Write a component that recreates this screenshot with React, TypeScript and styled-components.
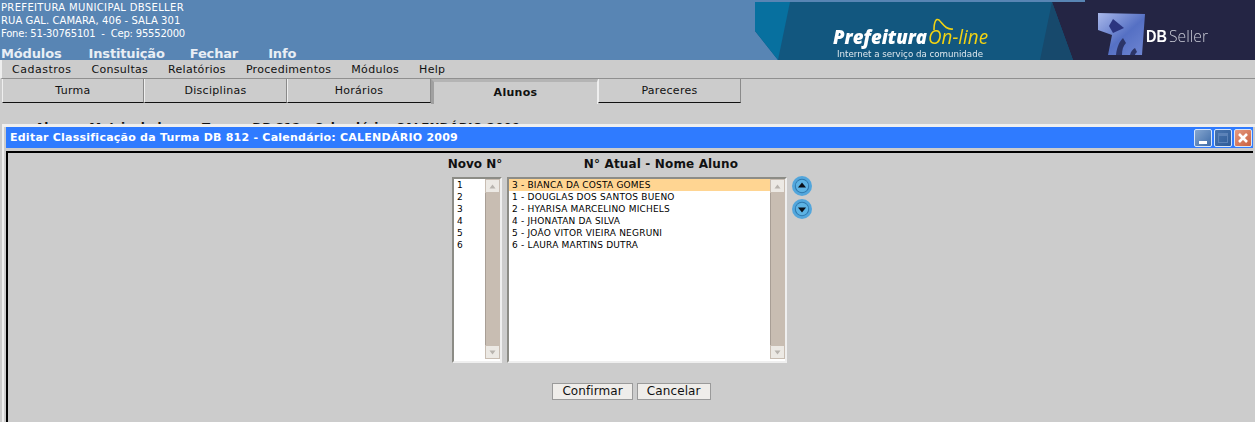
import React from "react";
import styled, { createGlobalStyle } from "styled-components";

const Global = createGlobalStyle`
  html, body {
    margin: 0;
    padding: 0;
    height: 422px;
    overflow: hidden;
    background: #cccccc;
    font-family: "DejaVu Sans", sans-serif;
  }
`;

const Page = styled.div`
  position: relative;
  width: 1255px;
  height: 422px;
  overflow: hidden;
  background: #cccccc;
`;

const Header = styled.header`
  display: flex;
  justify-content: space-between;
  height: 60px;
  overflow: hidden;
  background: #5885b4;
`;

const HeaderInfo = styled.div`
  display: flex;
  flex-direction: column;
  padding: 1px 0 0 1px;
  color: #ffffff;
`;

const InfoLine = styled.div<{ $spacing: number }>`
  font-size: 10px;
  line-height: 13px;
  letter-spacing: ${(p) => p.$spacing}px;
  white-space: pre;
`;

const ModuleNav = styled.nav`
  display: flex;
  margin-top: 7px;
`;

const ModuleLink = styled.span<{ $gap: number }>`
  margin-right: ${(p) => p.$gap}px;
  font-size: 13px;
  font-weight: 700;
  line-height: 14px;
  letter-spacing: -0.15px;
  color: #e8eef5;
`;

const LogoBanner = styled.svg`
  display: block;
  width: 500px;
  height: 60px;
  flex: none;
  filter: blur(0.35px);
`;

const MenuBar = styled.div`
  display: flex;
  gap: 20px;
  height: 19px;
  padding: 1px 0 0 10px;
  align-items: center;
  border-left: 2px solid #eeeeee;
  box-sizing: border-box;
  border-bottom: 1px solid #8f8f8f;
`;

const MenuItem = styled.span`
  font-size: 11px;
  color: #111111;
  letter-spacing: 0.3px;

  &:first-child {
    letter-spacing: 0.5px;
  }
`;

const TabRow = styled.div`
  display: flex;
  align-items: flex-start;
  padding-left: 2px;
`;

const Tab = styled.div<{ $w: number; $active?: boolean }>`
  box-sizing: border-box;
  width: ${(p) => p.$w}px;
  height: ${(p) => (p.$active ? 25 : 24)}px;
  display: flex;
  align-items: center;
  justify-content: center;
  font-size: 11px;
  letter-spacing: 0.3px;
  color: #111111;
  border-left: 1px solid #efefef;
  border-right: 1px solid #8a8a8a;
  border-bottom: ${(p) => (p.$active ? "0" : "1px solid #111111")};
  ${(p) =>
    p.$active &&
    `
    font-weight: 700;
    padding-bottom: 2px;
    border-left: 3px solid #a0a0a0;
    border-top: 3px solid #b4b4b4;
    border-right: 1px solid #efefef;
  `}
`;

const BehindTitle = styled.div`
  margin: 17px 0 0 35px;
  font-size: 12px;
  font-weight: 700;
  line-height: 14px;
  white-space: pre;
  color: #111111;
`;

const Window = styled.section`
  position: absolute;
  left: 2px;
  top: 124px;
  width: 1253px;
  height: 298px;
  box-sizing: border-box;
  padding: 0 2px 0 2px;
  display: flex;
  flex-direction: column;
  background: #cccccc;
  border-top: 3px solid #efefef;
  border-left: 2px solid #efefef;
`;

const TitleBar = styled.div`
  flex: none;
  height: 21px;
  display: flex;
  align-items: center;
  justify-content: space-between;
  padding: 0 1px 0 4px;
  background: #2f7bff;
`;

const TitleText = styled.span`
  font-size: 11px;
  font-weight: 700;
  letter-spacing: 0.24px;
  color: #ffffff;
`;

const WinButtons = styled.div`
  display: flex;
  gap: 2px;
`;

const WinButton = styled.div<{ $bg: string }>`
  box-sizing: border-box;
  width: 18px;
  height: 18px;
  border: 1px solid #d8e6fa;
  border-radius: 2px;
  background: ${(p) => p.$bg};
  display: flex;
  align-items: center;
  justify-content: center;
`;

const MinBar = styled.div`
  width: 8px;
  height: 3px;
  margin-top: 9px;
  background: #ffffff;
`;

const MaxBox = styled.div`
  box-sizing: border-box;
  width: 10px;
  height: 10px;
  border: 1px solid #5c82b8;
  border-top-width: 3px;
`;

const WindowBody = styled.div`
  flex: 1;
  margin-top: 3px;
  border-left: 2px solid #000000;
  border-top: 2px solid #000000;
  display: flex;
  flex-direction: column;
  align-items: center;
  padding-left: 1px;
`;

const Columns = styled.div`
  display: flex;
  align-items: flex-start;
  margin-left: 2px;
  margin-top: 4px;
`;

const Column = styled.div<{ $w: number; $gap: number }>`
  width: ${(p) => p.$w}px;
  margin-right: ${(p) => p.$gap}px;
  display: flex;
  flex-direction: column;
  align-items: center;
`;

const ColumnLabel = styled.div<{ $shift: number; $spacing?: number }>`
  height: 20px;
  padding-left: ${(p) => Math.max(p.$shift, 0)}px;
  padding-right: ${(p) => Math.max(-p.$shift, 0)}px;
  font-size: 12px;
  font-weight: 700;
  line-height: 15px;
  letter-spacing: ${(p) => p.$spacing ?? 0}px;
  color: #111111;
  white-space: nowrap;
`;

const ListBox = styled.div<{ $w: number }>`
  box-sizing: border-box;
  width: ${(p) => p.$w}px;
  height: 186px;
  display: flex;
  background: #ffffff;
  border: 2px solid #efefef;
  border-top-color: #8c8c86;
  border-left-color: #8c8c86;
`;

const Options = styled.ul`
  flex: 1;
  min-width: 0;
  margin: 0;
  padding: 0;
  list-style: none;
`;

const Option = styled.li<{ $selected?: boolean }>`
  height: 12px;
  padding-left: 3px;
  font-size: 9px;
  line-height: 12px;
  letter-spacing: 0.2px;
  white-space: nowrap;
  color: #000000;
  background: ${(p) => (p.$selected ? "#ffd592" : "transparent")};
`;

const Scrollbar = styled.div`
  flex: none;
  width: 15px;
  display: flex;
  flex-direction: column;
  background: #c8bdb2;
  margin-bottom: 2px;
`;

const ScrollButton = styled.div`
  box-sizing: border-box;
  flex: none;
  height: 14px;
  display: flex;
  align-items: center;
  justify-content: center;
  background: #ece9e4;
  border: 1px solid #c8bdb2;
`;

const ScrollThumb = styled.div`
  flex: 1;
  background: #c8bdb2;
  border-left: 1px solid #a89e95;
`;

const Arrows = styled.div`
  display: flex;
  flex-direction: column;
  gap: 3px;
  margin-top: 19px;
`;

const Actions = styled.div`
  display: flex;
  gap: 4px;
  margin-top: 20px;
  margin-left: 1px;
`;

const ActionButton = styled.button`
  box-sizing: border-box;
  height: 17px;
  padding: 0 9px;
  font-family: "DejaVu Sans", sans-serif;
  font-size: 12px;
  line-height: 15px;
  letter-spacing: 0.1px;
  color: #111111;
  background: #efedea;
  border: 1px solid #9a9a9a;
`;

const ArrowGlyph = ({ up }: { up: boolean }) => (
  <svg width="7" height="5" viewBox="0 0 7 5">
    <path d={up ? "M3.5 0.5 L6.5 4.5 H0.5 Z" : "M0.5 0.5 H6.5 L3.5 4.5 Z"} fill="#b8b4ae" />
  </svg>
);

const ListScrollbar = () => (
  <Scrollbar>
    <ScrollButton>
      <ArrowGlyph up />
    </ScrollButton>
    <ScrollThumb />
    <ScrollButton>
      <ArrowGlyph up={false} />
    </ScrollButton>
  </Scrollbar>
);

const RoundArrow = ({ up }: { up: boolean }) => (
  <svg width="20" height="20" viewBox="0 0 20 20" style={{ display: "block" }}>
    <circle cx="10" cy="10" r="10" fill="#52a6dc" />
    <circle cx="10" cy="10" r="7.2" fill="#2f78ac" />
    <circle cx="10" cy="10" r="6.2" fill="#5db3e4" />
    <path d={up ? "M10 6.5 L14 11.5 H6 Z" : "M6 8.5 H14 L10 13.5 Z"} fill="#0a0f18" />
  </svg>
);

const Banner = () => (
  <LogoBanner viewBox="0 0 500 60">
    <defs>
      <linearGradient id="dbCube" x1="0" y1="0" x2="1" y2="1">
        <stop offset="0" stopColor="#a9b8ea" />
        <stop offset="0.55" stopColor="#5570c4" />
        <stop offset="1" stopColor="#6f86d2" />
      </linearGradient>
    </defs>
    <rect x="297" y="0" width="203" height="60" fill="#242544" />
    <rect x="297" y="0" width="33" height="2" fill="#5885b4" />
    <polygon points="0,2 297,2 318,60 23,60 0,31" fill="#12577f" />
    <polygon points="0,2 35,2 23,60 0,31" fill="#07709f" />
    <polygon points="297,2 318,60 285,60" fill="#17496c" />
    <text x="78" y="44" fontFamily="'Open Sans', sans-serif" fontStyle="italic" fontWeight="800" fontSize="20" fill="#ffffff" textLength="94" lengthAdjust="spacingAndGlyphs">
      Prefeitura
    </text>
    <text x="173" y="44" fontFamily="'Open Sans', sans-serif" fontStyle="italic" fontWeight="400" fontSize="20" fill="#f2d313" textLength="60" lengthAdjust="spacingAndGlyphs">
      On-line
    </text>
    <path d="M179 30 C179 22 181 18 184 20 C188 24 191 30 198 29" fill="none" stroke="#f2d313" strokeWidth="1.6" />
    <text x="82" y="57" fontFamily="'DejaVu Sans', sans-serif" fontSize="9" fill="#dfe8ee" textLength="146" lengthAdjust="spacingAndGlyphs">
      Internet a serviço da comunidade
    </text>
    <polygon points="343,13 390,14 387,55 353,55 357,35 343,30" fill="url(#dbCube)" />
    <polygon points="358,19 369,28 358,33 354,26" fill="#2b3580" />
    <path d="M361 55 C362 46 365 41 368 38 L371 43 C368 46 367 50 367 55 Z" fill="#2c3568" />
    <path d="M375 55 C376 51 378 49 380 48 L382 52 C381 53 380 54 380 55 Z" fill="#2c3568" />
    <text x="391" y="41.5" fontFamily="'Liberation Sans', sans-serif" fontWeight="700" fontSize="17" fill="#ffffff" textLength="21" lengthAdjust="spacingAndGlyphs">
      DB
    </text>
    <text x="414" y="41.5" fontFamily="'Open Sans', sans-serif" fontWeight="300" fontSize="17" fill="#c9cbd6" textLength="39" lengthAdjust="spacingAndGlyphs">
      Seller
    </text>
  </LogoBanner>
);

const modules = [
  { label: "Módulos", gap: 27 },
  { label: "Instituição", gap: 25 },
  { label: "Fechar", gap: 30 },
  { label: "Info", gap: 0 },
];
const menus = ["Cadastros", "Consultas", "Relatórios", "Procedimentos", "Módulos", "Help"];
const students = [
  "3 - BIANCA DA COSTA GOMES",
  "1 - DOUGLAS DOS SANTOS BUENO",
  "2 - HYARISA MARCELINO MICHELS",
  "4 - JHONATAN DA SILVA",
  "5 - JOÃO VITOR VIEIRA NEGRUNI",
  "6 - LAURA MARTINS DUTRA",
];

export default function App() {
  return (
    <Page>
      <Global />
      <Header>
        <HeaderInfo>
          <InfoLine $spacing={0.34}>PREFEITURA MUNICIPAL DBSELLER</InfoLine>
          <InfoLine $spacing={0.07}>RUA GAL. CAMARA, 406 - SALA 301</InfoLine>
          <InfoLine $spacing={-0.2}>Fone: 51-30765101  -  Cep: 95552000</InfoLine>
          <ModuleNav>
            {modules.map((m) => (
              <ModuleLink key={m.label} $gap={m.gap}>
                {m.label}
              </ModuleLink>
            ))}
          </ModuleNav>
        </HeaderInfo>
        <Banner />
      </Header>
      <MenuBar>
        {menus.map((m) => (
          <MenuItem key={m}>{m}</MenuItem>
        ))}
      </MenuBar>
      <TabRow>
        <Tab $w={142}>Turma</Tab>
        <Tab $w={143}>Disciplinas</Tab>
        <Tab $w={144}>Horários</Tab>
        <Tab $w={167} $active>
          Alunos
        </Tab>
        <Tab $w={143}>Pareceres</Tab>
      </TabRow>
      <BehindTitle>Alunos  Matriculados      Turma  DB 812 - Calendário: CALENDÁRIO 2009</BehindTitle>
      <Window>
        <TitleBar>
          <TitleText>Editar Classificação da Turma DB 812 - Calendário: CALENDÁRIO 2009</TitleText>
          <WinButtons>
            <WinButton $bg="linear-gradient(135deg, #86a6cf, #3f6ca8)">
              <MinBar />
            </WinButton>
            <WinButton $bg="linear-gradient(135deg, #4a74ad, #2f5c99)">
              <MaxBox />
            </WinButton>
            <WinButton $bg="linear-gradient(135deg, #e59a80, #c9603f)">
              <svg width="12" height="12" viewBox="0 0 12 12">
                <path d="M2 2 L10 10 M10 2 L2 10" stroke="#ffffff" strokeWidth="2.6" />
              </svg>
            </WinButton>
          </WinButtons>
        </TitleBar>
        <WindowBody>
          <Columns>
            <Column $w={50} $gap={5}>
              <ColumnLabel $shift={-4}>Novo N°</ColumnLabel>
              <ListBox $w={50}>
                <Options>
                  {[1, 2, 3, 4, 5, 6].map((n) => (
                    <Option key={n}>{n}</Option>
                  ))}
                </Options>
                <ListScrollbar />
              </ListBox>
            </Column>
            <Column $w={280} $gap={5}>
              <ColumnLabel $shift={28} $spacing={0.15}>
                N° Atual - Nome Aluno
              </ColumnLabel>
              <ListBox $w={280}>
                <Options>
                  {students.map((s, i) => (
                    <Option key={s} $selected={i === 0}>
                      {s}
                    </Option>
                  ))}
                </Options>
                <ListScrollbar />
              </ListBox>
            </Column>
            <Arrows>
              <RoundArrow up />
              <RoundArrow up={false} />
            </Arrows>
          </Columns>
          <Actions>
            <ActionButton>Confirmar</ActionButton>
            <ActionButton>Cancelar</ActionButton>
          </Actions>
        </WindowBody>
      </Window>
    </Page>
  );
}
